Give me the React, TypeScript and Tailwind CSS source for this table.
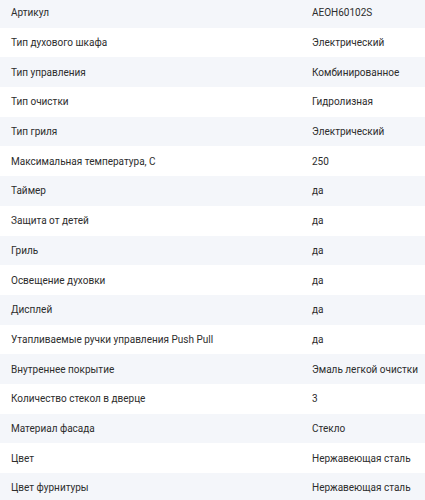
const SPECS: [string, string][] = [
  ['Артикул', 'AEOH60102S'],
  ['Тип духового шкафа', 'Электрический'],
  ['Тип управления', 'Комбинированное'],
  ['Тип очистки', 'Гидролизная'],
  ['Тип гриля', 'Электрический'],
  ['Максимальная температура, С', '250'],
  ['Таймер', 'да'],
  ['Защита от детей', 'да'],
  ['Гриль', 'да'],
  ['Освещение духовки', 'да'],
  ['Дисплей', 'да'],
  ['Утапливаемые ручки управления Push Pull', 'да'],
  ['Внутреннее покрытие', 'Эмаль легкой очистки'],
  ['Количество стекол в дверце', '3'],
  ['Материал фасада', 'Стекло'],
  ['Цвет', 'Нержавеющая сталь'],
  ['Цвет фурнитуры', 'Нержавеющая сталь'],
]

export default function App() {
  return (
    <div className="w-[425px] h-[500px] overflow-hidden bg-white font-['Roboto',sans-serif] text-[10px] text-[#2d2d2d]">
      <div className="-mt-[2px]">
        {SPECS.map(([label, value], i) => (
          <div
            key={label}
            className={`flex items-center h-[29.7px] whitespace-nowrap ${i % 2 === 0 ? 'bg-[#f4f6fa]' : 'bg-white'}`}
          >
            <div className="w-[312px] pl-[11px] shrink-0">{label}</div>
            <div className="flex-1">{value}</div>
          </div>
        ))}
      </div>
    </div>
  )
}
